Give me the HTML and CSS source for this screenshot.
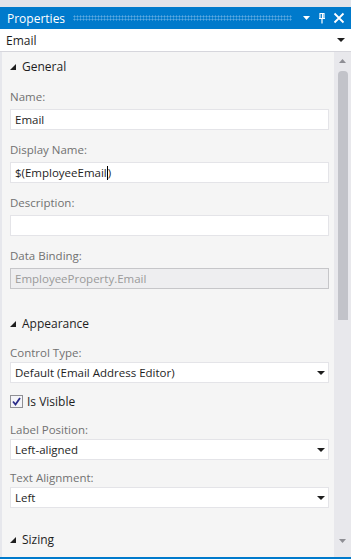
FILE: index.html
```html
<!DOCTYPE html>
<html lang="en">

<head>
    <meta charset="UTF-8">
    <title>Properties</title>
    <link rel="stylesheet" href="styles.css">
</head>

<body>
    <div class="panel">
        <div class="frame-top"></div>
        <div class="titlebar">
            <span class="title">Properties</span>
            <span class="grip"></span>
            <svg class="tool" width="9" height="12" viewBox="0 0 9 12"><polygon points="1,4 8,4 4.5,8" fill="#fff"/></svg>
            <svg class="tool" width="10" height="12" viewBox="0 0 10 12"><path d="M3 1.5h4v5h-4z M2 6.5h6 M5 6.5v5" stroke="#fff" stroke-width="1.2" fill="none"/><path d="M5.5 1.5v5" stroke="#fff" stroke-width="1.2"/></svg>
            <svg class="tool" width="12" height="12" viewBox="0 0 12 12"><path d="M1.5 1.5l9 9M10.5 1.5l-9 9" stroke="#fff" stroke-width="1.8"/></svg>
        </div>
        <div class="object-select">
            <span>Email</span>
            <svg width="8" height="6" viewBox="0 0 8 6"><polygon points="0,1 8,1 4,5" fill="#1e1e1e"/></svg>
        </div>
        <div class="main">
            <div class="content">
                <div class="section-head">
                    <svg width="6" height="6" viewBox="0 0 6 6"><polygon points="6,0 6,6 0,6" fill="#1e1e1e"/></svg>
                    <span>General</span>
                </div>
                <div class="field">
                    <div class="label">Name:</div>
                    <div class="input">Email</div>
                </div>
                <div class="field">
                    <div class="label">Display Name:</div>
                    <div class="input">$(EmployeeEmail<span class="caret"></span>)</div>
                </div>
                <div class="field">
                    <div class="label">Description:</div>
                    <div class="input"></div>
                </div>
                <div class="field">
                    <div class="label">Data Binding:</div>
                    <div class="input readonly">EmployeeProperty.Email</div>
                </div>

                <div class="section-head section-gap">
                    <svg width="6" height="6" viewBox="0 0 6 6"><polygon points="6,0 6,6 0,6" fill="#1e1e1e"/></svg>
                    <span>Appearance</span>
                </div>
                <div class="field compact">
                    <div class="label">Control Type:</div>
                    <div class="input select">
                        <span>Default (Email Address Editor)</span>
                        <svg width="8" height="6" viewBox="0 0 8 6"><polygon points="0,1 8,1 4,5" fill="#1e1e1e"/></svg>
                    </div>
                </div>
                <label class="check-row">
                    <span class="checkbox">
                        <svg width="9" height="9" viewBox="0 0 9 9"><path d="M1 4.5l2.5 3L8 1" stroke="#2b2d8a" stroke-width="1.8" fill="none"/></svg>
                    </span>
                    <span>Is Visible</span>
                </label>
                <div class="field compact">
                    <div class="label">Label Position:</div>
                    <div class="input select">
                        <span>Left-aligned</span>
                        <svg width="8" height="6" viewBox="0 0 8 6"><polygon points="0,1 8,1 4,5" fill="#1e1e1e"/></svg>
                    </div>
                </div>
                <div class="field compact">
                    <div class="label">Text Alignment:</div>
                    <div class="input select">
                        <span>Left</span>
                        <svg width="8" height="6" viewBox="0 0 8 6"><polygon points="0,1 8,1 4,5" fill="#1e1e1e"/></svg>
                    </div>
                </div>

                <div class="section-head sizing-gap">
                    <svg width="6" height="6" viewBox="0 0 6 6"><polygon points="6,0 6,6 0,6" fill="#1e1e1e"/></svg>
                    <span>Sizing</span>
                </div>
            </div>
            <div class="scrollbar">
                <div class="arrow">
                    <svg width="7" height="4" viewBox="0 0 7 4"><polygon points="0,4 7,4 3.5,0" fill="#8e8e94"/></svg>
                </div>
                <div class="thumb"></div>
                <div class="arrow arrow-down">
                    <svg width="7" height="4" viewBox="0 0 7 4"><polygon points="0,0 7,0 3.5,4" fill="#8e8e94"/></svg>
                </div>
            </div>
        </div>
        <div class="frame-bottom"></div>
    </div>
</body>

</html>
```

FILE: styles.css
```css
body {
    margin: 0;
    padding: 0;
    font-family: 'Open Sans', 'Noto Sans', sans-serif;
    font-size: 11.5px;
    color: #1e1e1e;
    background: #f5f5f5;
}

.panel {
    width: 351px;
    height: 559px;
    display: flex;
    flex-direction: column;
    overflow: hidden;
}

.frame-top {
    flex-shrink: 0;
    height: 7px;
    background: #e2e4ea;
}

.titlebar {
    flex-shrink: 0;
    height: 22px;
    background: #007acc;
    display: flex;
    align-items: center;
    padding: 0 6px 0 7px;
    gap: 6px;
    color: #fff;
}

.title {
    font-size: 12px;
    margin-right: 2px;
}

.grip {
    flex: 1;
    height: 6px;
    margin-right: 4px;
    background-image: radial-gradient(circle, #5ea9e0 45%, transparent 50%);
    background-size: 3px 3px;
}

.tool {
    display: block;
}

.object-select {
    flex-shrink: 0;
    height: 22px;
    background: #fff;
    border-bottom: 1px solid #d6d6dc;
    display: flex;
    align-items: center;
    justify-content: space-between;
    padding: 0 6px 0 6px;
    font-size: 12px;
}

.main {
    flex: 1;
    min-height: 0;
    overflow: hidden;
    display: flex;
    border-left: 2px solid #e6e7ec;
}

.content {
    flex: 1;
    background: #f5f5f5;
    padding: 6px 5px 0 8px;
}

.section-head {
    height: 16px;
    display: flex;
    align-items: center;
    gap: 6px;
    font-size: 12px;
    margin-bottom: 15px;
}

.section-head svg {
    margin-top: 2px;
}

.section-gap {
    margin-top: 26px;
    margin-bottom: 14px;
}

.sizing-gap {
    margin-top: 23px;
    margin-bottom: 0;
}

.field {
    margin-bottom: 12px;
}

.field.compact {
    margin-bottom: 10px;
}

.label {
    height: 16px;
    line-height: 16px;
    color: #717171;
    margin-bottom: 4px;
}

.compact .label {
    margin-bottom: 1px;
}

.input {
    height: 19px;
    line-height: 19px;
    background: #fff;
    border: 1px solid #e4e4e8;
    padding: 0 4px;
    display: flex;
    align-items: center;
    white-space: nowrap;
}

.input.readonly {
    background: #eeeef0;
    border-color: #c6c6c9;
    color: #9a9a9a;
}

.input.select {
    justify-content: space-between;
    padding-right: 3px;
}

.caret {
    display: inline-block;
    width: 1px;
    height: 14px;
    background: #000;
}

.check-row {
    height: 16px;
    display: flex;
    align-items: center;
    gap: 4px;
    margin-bottom: 13px;
    font-size: 12px;
}

.checkbox {
    width: 11px;
    height: 11px;
    border: 1px solid #8f9094;
    background: #f4f4f8;
    display: flex;
    align-items: center;
    justify-content: center;
}

.scrollbar {
    flex-shrink: 0;
    width: 17px;
    background: #e8e8ec;
    display: flex;
    flex-direction: column;
    align-items: center;
}

.arrow {
    height: 18px;
    display: flex;
    align-items: center;
    justify-content: center;
}

.thumb {
    width: 10px;
    height: 249px;
    margin-top: 1px;
    background: #c2c3c9;
    border-radius: 4px 4px 0 0;
}

.arrow-down {
    margin-top: auto;
    margin-bottom: 7px;
}

.frame-bottom {
    flex-shrink: 0;
    height: 2px;
    background: #007acc;
}
```
